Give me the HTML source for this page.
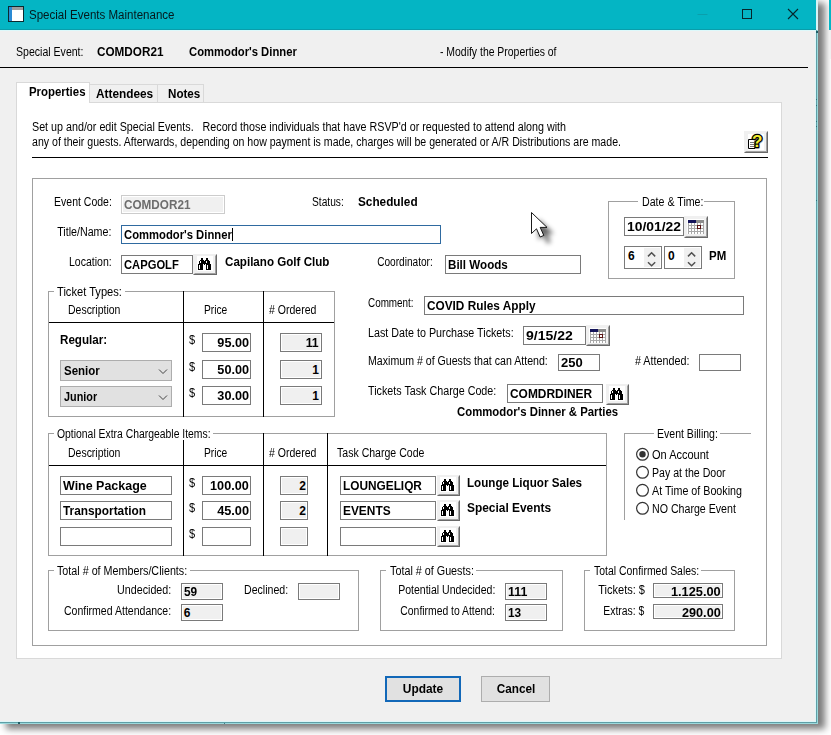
<!DOCTYPE html>
<html><head><meta charset="utf-8"><title>Special Events Maintenance</title>
<style>
html,body{margin:0;padding:0;background:#fff}
body{width:831px;height:735px;position:relative;overflow:hidden;font:12px/14px "Liberation Sans",sans-serif;color:#000}
.a{position:absolute;box-sizing:border-box}
.t{position:absolute;white-space:pre;font:12px/14px "Liberation Sans",sans-serif}
</style></head><body>
<div class="a" style="left:6px;top:3px;width:818.5px;height:725.5px;background:rgba(0,0,0,.52);filter:blur(3.7px)"></div>
<div class="a" style="left:0;top:0;width:818px;height:724px;background:#F0F0F0"></div>
<div class="a" style="left:829px;top:0;width:2px;height:30px;background:#04B5C4"></div>
<div class="a" style="left:829px;top:30px;width:2px;height:29px;background:#F0F0F0"></div>
<div class="a" style="left:815px;top:30px;width:1px;height:692px;background:#DDF6F8"></div>
<div class="a" style="left:816px;top:30px;width:1px;height:694px;background:#5E9FA6"></div>
<div class="a" style="left:817px;top:0;width:1px;height:724px;background:#9ADADD"></div>
<div class="a" style="left:0;top:721px;width:816px;height:1px;background:#DDF6F8"></div>
<div class="a" style="left:0;top:722px;width:817px;height:1px;background:#5E9FA6"></div>
<div class="a" style="left:0;top:723px;width:818px;height:1px;background:#9ADADD"></div>
<div class="a" style="left:18px;top:722px;width:2px;height:2px;background:#1F5F68"></div>
<div class="a" style="left:224px;top:723px;width:1px;height:1px;background:#3F7F88"></div>
<div class="a" style="left:816px;top:99px;width:1px;height:1px;background:#2F6F78"></div>
<div class="a" style="left:816px;top:105px;width:1px;height:1px;background:#2F6F78"></div>
<div class="a" style="left:816px;top:121px;width:1px;height:1px;background:#2F6F78"></div>
<div class="a" style="left:816px;top:126px;width:1px;height:1px;background:#2F6F78"></div>
<div class="a" style="left:816px;top:200px;width:1px;height:1px;background:#2F6F78"></div>
<div class="a" style="left:816px;top:31px;width:2px;height:2px;background:#1F5F68"></div>
<div class="a" style="left:0;top:0;width:817px;height:30px;background:#04B5C4"></div>
<div class="a" style="left:816px;top:0;width:2px;height:30px;background:#D8F4F6"></div>
<div class="a" style="left:0;top:29px;width:816px;height:1px;background:#0A9DAA"></div>
<div class="a" style="left:0;top:30px;width:816px;height:1px;background:#DDF9FB"></div>
<svg class="a" style="left:8px;top:6px" width="16" height="16" viewBox="0 0 16 16"><rect x="0.5" y="0.5" width="15" height="15" fill="#fff" stroke="#0B2A30" stroke-width="1"/><rect x="1" y="1" width="14" height="3" fill="#9C9C9C"/><rect x="1" y="1" width="3" height="14" fill="#2A8AD4"/></svg>
<span class="t " style="top:8px;left:28.8px;transform:scaleX(0.9608);transform-origin:0 0;color:#05181B;">Special Events Maintenance</span>
<svg class="a" style="left:690px;top:0" width="126" height="30" viewBox="0 0 126 30"><path d="M7.5 14.5h10" stroke="#0A9FAC" stroke-width="1"/><rect x="52.5" y="9.5" width="9" height="9" fill="none" stroke="#06262B" stroke-width="1"/><path d="M98 9l10 10M108 9l-10 10" stroke="#06262B" stroke-width="1.1"/></svg>
<span class="t " style="top:45px;left:16.3px;transform:scaleX(0.8446);transform-origin:0 0;font-size:12.5px;">Special Event:</span>
<span class="t " style="top:45px;left:96.5px;transform:scaleX(0.9777);transform-origin:0 0;font-weight:bold;">COMDOR21</span>
<span class="t " style="top:45px;left:189px;transform:scaleX(0.9384);transform-origin:0 0;font-weight:bold;">Commodor's Dinner</span>
<span class="t " style="top:45px;left:440.3px;transform:scaleX(0.8342);transform-origin:0 0;font-size:12.5px;">- Modify the Properties of</span>
<div class="a" style="left:0px;top:67px;width:808px;height:1px;background:#000;"></div>
<div class="a" style="left:16px;top:102px;width:766px;height:557px;background:#fff;border:1px solid #D9D9D9;"></div>
<div class="a" style="left:89px;top:84px;width:69px;height:19px;background:#F0F0F0;border:1px solid #D9D9D9;"></div>
<div class="a" style="left:157px;top:84px;width:47px;height:19px;background:#F0F0F0;border:1px solid #D9D9D9;"></div>
<div class="a" style="left:16px;top:82px;width:74px;height:21px;background:#fff;border:1px solid #D9D9D9;border-bottom:none;"></div>
<span class="t " style="top:85px;left:28.7px;transform:scaleX(0.9518);transform-origin:0 0;font-weight:bold;">Properties</span>
<span class="t " style="top:87px;left:96.2px;transform:scaleX(0.9859);transform-origin:0 0;font-weight:bold;">Attendees</span>
<span class="t " style="top:87px;left:167.5px;transform:scaleX(0.9687);transform-origin:0 0;font-weight:bold;">Notes</span>
<span class="t " style="top:120px;left:31.6px;transform:scaleX(0.8582);transform-origin:0 0;font-size:12.5px;">Set up and/or edit Special Events.   Record those individuals that have RSVP'd or requested to attend along with</span>
<span class="t " style="top:135px;left:31.6px;transform:scaleX(0.8468);transform-origin:0 0;font-size:12.5px;">any of their guests. Afterwards, depending on how payment is made, charges will be generated or A/R Distributions are made.</span>
<div class="a" style="left:32px;top:157px;width:736px;height:1px;background:#000;"></div>
<div class="a" style="left:744px;top:131px;width:24px;height:22px;background:#F0F0F0;box-sizing:border-box;border-top:1px solid #F0F0F0;border-left:1px solid #F0F0F0;border-right:1px solid #696969;border-bottom:1px solid #696969;"><div class="a" style="left:0;top:0;right:0;bottom:0;border-right:1px solid #A0A0A0;border-bottom:1px solid #A0A0A0;border-top:1px solid #F0F0F0;border-left:1px solid #F0F0F0"></div></div>
<div class="a" style="left:748px;top:134px;width:16px;height:16px;background:#fff;"></div>
<svg class="a" style="left:748px;top:133px;overflow:visible" width="16" height="17" viewBox="0 0 16 17"><path d="M0.5 6.5h6.5v9H0.5z" fill="#fff" stroke="#000" stroke-width="1"/><path d="M2 9.5h4M2 11.5h4M2 13.5h4" stroke="#777" stroke-width="1"/><text x="10.3" y="15.2" font-family="Liberation Sans, sans-serif" font-weight="bold" font-size="17" text-anchor="middle" fill="#bbb" stroke="#bbb" stroke-width="1.5" stroke-linejoin="round">?</text><text x="9.3" y="14.2" font-family="Liberation Sans, sans-serif" font-weight="bold" font-size="17" text-anchor="middle" fill="#000" stroke="#000" stroke-width="2.6" stroke-linejoin="round">?</text><text x="9.3" y="14.2" font-family="Liberation Sans, sans-serif" font-weight="bold" font-size="17" text-anchor="middle" fill="#F4EC2E">?</text></svg>
<div class="a" style="left:32px;top:178px;width:735px;height:468px;border:1px solid #A0A0A0;"></div>
<span class="t " style="top:195px;right:719.5px;transform:scaleX(0.8387);transform-origin:100% 0;font-size:12.5px;">Event Code:</span>
<div class="a" style="left:121px;top:195px;width:104px;height:19px;background:#F0F0F0;border:1px solid #CCCCCC;box-shadow:inset 0 0 0 1px #fff;"></div>
<span class="t " style="top:198px;left:124.4px;transform:scaleX(0.9777);transform-origin:0 0;font-weight:bold;color:#6D6D6D;">COMDOR21</span>
<span class="t " style="top:195px;left:311.8px;transform:scaleX(0.8171);transform-origin:0 0;font-size:12.5px;">Status:</span>
<span class="t " style="top:195px;left:357.5px;transform:scaleX(0.9821);transform-origin:0 0;font-weight:bold;">Scheduled</span>
<span class="t " style="top:225px;right:719.5px;transform:scaleX(0.8559);transform-origin:100% 0;font-size:12.5px;">Title/Name:</span>
<div class="a" style="left:121px;top:225px;width:320px;height:19px;background:#fff;border:1px solid #2F6AA0;"></div>
<span class="t " style="top:228px;left:124.4px;transform:scaleX(0.9384);transform-origin:0 0;font-weight:bold;">Commodor's Dinner</span>
<div class="a" style="left:232px;top:228px;width:1px;height:13px;background:#000;"></div>
<span class="t " style="top:255px;right:719.5px;transform:scaleX(0.8436);transform-origin:100% 0;font-size:12.5px;">Location:</span>
<div class="a" style="left:121px;top:255px;width:72px;height:19px;background:#FFFFFF;border:1px solid #7A7A7A;"></div>
<span class="t " style="top:258px;left:123.8px;transform:scaleX(0.934);transform-origin:0 0;font-weight:bold;">CAPGOLF</span>
<div class="a" style="left:193px;top:254px;width:24px;height:21px;background:#F0F0F0;box-sizing:border-box;border-top:1px solid #F0F0F0;border-left:1px solid #F0F0F0;border-right:1px solid #696969;border-bottom:1px solid #696969;"><div class="a" style="left:0;top:0;right:0;bottom:0;border-right:1px solid #A0A0A0;border-bottom:1px solid #A0A0A0;border-top:1px solid #F0F0F0;border-left:1px solid #F0F0F0"></div></div>
<div class="a" style="left:197px;top:256px;width:16px;height:15px;background:#fff;"></div>
<svg class="a" style="left:198px;top:258px" width="13" height="12" viewBox="0 0 13 12" shape-rendering="crispEdges"><rect x="3" y="0" width="2" height="1" fill="#000"/><rect x="8" y="0" width="2" height="1" fill="#000"/><rect x="3" y="1" width="2" height="1" fill="#000"/><rect x="8" y="1" width="2" height="1" fill="#000"/><rect x="2" y="2" width="4" height="1" fill="#000"/><rect x="7" y="2" width="4" height="1" fill="#000"/><rect x="1" y="3" width="1" height="1" fill="#000"/><rect x="2" y="3" width="1" height="1" fill="#fff"/><rect x="3" y="3" width="5" height="1" fill="#000"/><rect x="8" y="3" width="1" height="1" fill="#fff"/><rect x="9" y="3" width="3" height="1" fill="#000"/><rect x="1" y="4" width="1" height="1" fill="#000"/><rect x="2" y="4" width="1" height="1" fill="#fff"/><rect x="3" y="4" width="5" height="1" fill="#000"/><rect x="8" y="4" width="1" height="1" fill="#fff"/><rect x="9" y="4" width="3" height="1" fill="#000"/><rect x="1" y="5" width="11" height="1" fill="#000"/><rect x="0" y="6" width="5" height="1" fill="#000"/><rect x="6" y="6" width="1" height="1" fill="#000"/><rect x="8" y="6" width="5" height="1" fill="#000"/><rect x="0" y="7" width="1" height="1" fill="#000"/><rect x="1" y="7" width="1" height="1" fill="#fff"/><rect x="2" y="7" width="3" height="1" fill="#000"/><rect x="8" y="7" width="1" height="1" fill="#000"/><rect x="9" y="7" width="1" height="1" fill="#fff"/><rect x="10" y="7" width="3" height="1" fill="#000"/><rect x="0" y="8" width="1" height="1" fill="#000"/><rect x="1" y="8" width="1" height="1" fill="#fff"/><rect x="2" y="8" width="3" height="1" fill="#000"/><rect x="8" y="8" width="1" height="1" fill="#000"/><rect x="9" y="8" width="1" height="1" fill="#fff"/><rect x="10" y="8" width="3" height="1" fill="#000"/><rect x="0" y="9" width="1" height="1" fill="#000"/><rect x="1" y="9" width="1" height="1" fill="#fff"/><rect x="2" y="9" width="3" height="1" fill="#000"/><rect x="8" y="9" width="1" height="1" fill="#000"/><rect x="9" y="9" width="1" height="1" fill="#fff"/><rect x="10" y="9" width="3" height="1" fill="#000"/><rect x="0" y="10" width="1" height="1" fill="#000"/><rect x="1" y="10" width="1" height="1" fill="#fff"/><rect x="2" y="10" width="3" height="1" fill="#000"/><rect x="8" y="10" width="1" height="1" fill="#000"/><rect x="9" y="10" width="1" height="1" fill="#fff"/><rect x="10" y="10" width="3" height="1" fill="#000"/><rect x="0" y="11" width="5" height="1" fill="#000"/><rect x="8" y="11" width="5" height="1" fill="#000"/></svg>
<span class="t " style="top:255px;left:224.6px;transform:scaleX(0.9667);transform-origin:0 0;font-weight:bold;">Capilano Golf Club</span>
<span class="t " style="top:255px;right:398.7px;transform:scaleX(0.8082);transform-origin:100% 0;font-size:12.5px;">Coordinator:</span>
<div class="a" style="left:445px;top:255px;width:136px;height:19px;background:#FFFFFF;border:1px solid #7A7A7A;"></div>
<span class="t " style="top:258px;left:447.8px;transform:scaleX(0.9679);transform-origin:0 0;font-weight:bold;">Bill Woods</span>
<div class="a" style="left:608px;top:201px;width:127px;height:78px;border-top:1px solid #A0A0A0;border-left:1px solid #A0A0A0;border-right:1px solid #A0A0A0;border-bottom:1px solid #A0A0A0;"></div>
<div class="a" style="left:638.2px;top:195px;width:66.29999999999995px;height:14px;background:#fff"></div>
<span class="t " style="top:195px;left:641.5px;transform:scaleX(0.8512);transform-origin:0 0;font-size:12.5px;">Date &amp; Time:</span>
<div class="a" style="left:624px;top:217px;width:60px;height:19px;background:#FFFFFF;border:1px solid #7A7A7A;"></div>
<span class="t " style="top:220px;left:626.8px;transform:scaleX(1.1559);transform-origin:0 0;font-weight:bold;">10/01/22</span>
<div class="a" style="left:684px;top:216px;width:24px;height:22px;background:#F0F0F0;box-sizing:border-box;border-top:1px solid #F0F0F0;border-left:1px solid #F0F0F0;border-right:1px solid #696969;border-bottom:1px solid #696969;"><div class="a" style="left:0;top:0;right:0;bottom:0;border-right:1px solid #A0A0A0;border-bottom:1px solid #A0A0A0;border-top:1px solid #F0F0F0;border-left:1px solid #F0F0F0"></div></div>
<div class="a" style="left:687px;top:219px;width:17px;height:15px;background:#fff;"></div>
<svg class="a" style="left:688px;top:220px" width="16" height="14" viewBox="0 0 16 14" shape-rendering="crispEdges"><rect x="0" y="0" width="8" height="1" fill="#14145A"/><rect x="8" y="0" width="8" height="1" fill="#8C8C8C"/><rect x="0" y="1" width="8" height="1" fill="#14145A"/><rect x="8" y="1" width="8" height="1" fill="#8C8C8C"/><rect x="0" y="2" width="8" height="1" fill="#14145A"/><rect x="8" y="2" width="8" height="1" fill="#8C8C8C"/><rect x="0" y="3" width="1" height="1" fill="#A8A8A8"/><rect x="1" y="3" width="2" height="1" fill="#fff"/><rect x="3" y="3" width="1" height="1" fill="#A8A8A8"/><rect x="4" y="3" width="2" height="1" fill="#fff"/><rect x="6" y="3" width="1" height="1" fill="#A8A8A8"/><rect x="7" y="3" width="2" height="1" fill="#fff"/><rect x="9" y="3" width="1" height="1" fill="#A8A8A8"/><rect x="10" y="3" width="2" height="1" fill="#fff"/><rect x="12" y="3" width="1" height="1" fill="#A8A8A8"/><rect x="13" y="3" width="2" height="1" fill="#fff"/><rect x="15" y="3" width="1" height="1" fill="#A8A8A8"/><rect x="0" y="4" width="1" height="1" fill="#A8A8A8"/><rect x="1" y="4" width="2" height="1" fill="#fff"/><rect x="3" y="4" width="1" height="1" fill="#A8A8A8"/><rect x="4" y="4" width="2" height="1" fill="#fff"/><rect x="6" y="4" width="1" height="1" fill="#A8A8A8"/><rect x="7" y="4" width="2" height="1" fill="#fff"/><rect x="9" y="4" width="1" height="1" fill="#A8A8A8"/><rect x="10" y="4" width="2" height="1" fill="#fff"/><rect x="12" y="4" width="1" height="1" fill="#A8A8A8"/><rect x="13" y="4" width="2" height="1" fill="#fff"/><rect x="15" y="4" width="1" height="1" fill="#A8A8A8"/><rect x="0" y="5" width="9" height="1" fill="#A8A8A8"/><rect x="9" y="5" width="4" height="1" fill="#5A1414"/><rect x="13" y="5" width="3" height="1" fill="#A8A8A8"/><rect x="0" y="6" width="1" height="1" fill="#A8A8A8"/><rect x="1" y="6" width="2" height="1" fill="#fff"/><rect x="3" y="6" width="1" height="1" fill="#A8A8A8"/><rect x="4" y="6" width="2" height="1" fill="#fff"/><rect x="6" y="6" width="1" height="1" fill="#A8A8A8"/><rect x="7" y="6" width="2" height="1" fill="#fff"/><rect x="9" y="6" width="1" height="1" fill="#5A1414"/><rect x="10" y="6" width="2" height="1" fill="#fff"/><rect x="12" y="6" width="1" height="1" fill="#5A1414"/><rect x="13" y="6" width="2" height="1" fill="#fff"/><rect x="15" y="6" width="1" height="1" fill="#A8A8A8"/><rect x="0" y="7" width="1" height="1" fill="#A8A8A8"/><rect x="1" y="7" width="2" height="1" fill="#fff"/><rect x="3" y="7" width="1" height="1" fill="#A8A8A8"/><rect x="4" y="7" width="2" height="1" fill="#fff"/><rect x="6" y="7" width="1" height="1" fill="#A8A8A8"/><rect x="7" y="7" width="2" height="1" fill="#fff"/><rect x="9" y="7" width="1" height="1" fill="#5A1414"/><rect x="10" y="7" width="2" height="1" fill="#fff"/><rect x="12" y="7" width="1" height="1" fill="#5A1414"/><rect x="13" y="7" width="2" height="1" fill="#fff"/><rect x="15" y="7" width="1" height="1" fill="#A8A8A8"/><rect x="0" y="8" width="9" height="1" fill="#A8A8A8"/><rect x="9" y="8" width="4" height="1" fill="#5A1414"/><rect x="13" y="8" width="3" height="1" fill="#A8A8A8"/><rect x="0" y="9" width="1" height="1" fill="#A8A8A8"/><rect x="1" y="9" width="2" height="1" fill="#fff"/><rect x="3" y="9" width="1" height="1" fill="#A8A8A8"/><rect x="4" y="9" width="2" height="1" fill="#fff"/><rect x="6" y="9" width="1" height="1" fill="#A8A8A8"/><rect x="7" y="9" width="2" height="1" fill="#fff"/><rect x="9" y="9" width="1" height="1" fill="#A8A8A8"/><rect x="10" y="9" width="2" height="1" fill="#fff"/><rect x="12" y="9" width="1" height="1" fill="#A8A8A8"/><rect x="13" y="9" width="2" height="1" fill="#fff"/><rect x="15" y="9" width="1" height="1" fill="#A8A8A8"/><rect x="0" y="10" width="1" height="1" fill="#A8A8A8"/><rect x="1" y="10" width="2" height="1" fill="#fff"/><rect x="3" y="10" width="1" height="1" fill="#A8A8A8"/><rect x="4" y="10" width="2" height="1" fill="#fff"/><rect x="6" y="10" width="1" height="1" fill="#A8A8A8"/><rect x="7" y="10" width="2" height="1" fill="#fff"/><rect x="9" y="10" width="1" height="1" fill="#A8A8A8"/><rect x="10" y="10" width="2" height="1" fill="#fff"/><rect x="12" y="10" width="1" height="1" fill="#A8A8A8"/><rect x="13" y="10" width="2" height="1" fill="#fff"/><rect x="15" y="10" width="1" height="1" fill="#A8A8A8"/><rect x="0" y="11" width="16" height="1" fill="#A8A8A8"/><rect x="0" y="12" width="1" height="1" fill="#A8A8A8"/><rect x="1" y="12" width="2" height="1" fill="#fff"/><rect x="3" y="12" width="1" height="1" fill="#A8A8A8"/><rect x="4" y="12" width="2" height="1" fill="#fff"/><rect x="6" y="12" width="1" height="1" fill="#A8A8A8"/><rect x="7" y="12" width="2" height="1" fill="#fff"/><rect x="9" y="12" width="1" height="1" fill="#A8A8A8"/><rect x="10" y="12" width="2" height="1" fill="#fff"/><rect x="12" y="12" width="1" height="1" fill="#A8A8A8"/><rect x="13" y="12" width="2" height="1" fill="#fff"/><rect x="15" y="12" width="1" height="1" fill="#A8A8A8"/><rect x="0" y="13" width="1" height="1" fill="#A8A8A8"/><rect x="1" y="13" width="2" height="1" fill="#fff"/><rect x="3" y="13" width="1" height="1" fill="#A8A8A8"/><rect x="4" y="13" width="2" height="1" fill="#fff"/><rect x="6" y="13" width="1" height="1" fill="#A8A8A8"/><rect x="7" y="13" width="2" height="1" fill="#fff"/><rect x="9" y="13" width="1" height="1" fill="#A8A8A8"/><rect x="10" y="13" width="2" height="1" fill="#fff"/><rect x="12" y="13" width="1" height="1" fill="#A8A8A8"/><rect x="13" y="13" width="2" height="1" fill="#fff"/><rect x="15" y="13" width="1" height="1" fill="#A8A8A8"/></svg>
<div class="a" style="left:624px;top:246px;width:38px;height:23px;background:#fff;border:1px solid #7A7A7A;"></div>
<span class="t " style="top:249px;left:628px;transform:scaleX(1.0);transform-origin:0 0;font-weight:bold;">6</span>
<div class="a" style="left:644px;top:248px;width:16px;height:19px;background:#F0F0F0"></div>
<svg class="a" style="left:644px;top:248px" width="16" height="19" viewBox="0 0 16 19"><path d="M4 8.4l3.6-3.6 3.6 3.6M4 14.2l3.6 3.6 3.6-3.6" stroke="#505050" stroke-width="1.5" fill="none"/></svg>
<div class="a" style="left:664px;top:246px;width:38px;height:23px;background:#fff;border:1px solid #7A7A7A;"></div>
<span class="t " style="top:249px;left:668px;transform:scaleX(1.0);transform-origin:0 0;font-weight:bold;">0</span>
<div class="a" style="left:684px;top:248px;width:16px;height:19px;background:#F0F0F0"></div>
<svg class="a" style="left:684px;top:248px" width="16" height="19" viewBox="0 0 16 19"><path d="M4 8.4l3.6-3.6 3.6 3.6M4 14.2l3.6 3.6 3.6-3.6" stroke="#505050" stroke-width="1.5" fill="none"/></svg>
<span class="t " style="top:249px;left:709px;transform:scaleX(0.9556);transform-origin:0 0;font-weight:bold;">PM</span>
<div class="a" style="left:48px;top:291px;width:287px;height:126px;border-top:1px solid #A0A0A0;border-left:1px solid #A0A0A0;border-right:1px solid #A0A0A0;border-bottom:1px solid #A0A0A0;"></div>
<div class="a" style="left:53.8px;top:285px;width:70.9px;height:14px;background:#fff"></div>
<span class="t " style="top:285px;left:57.1px;transform:scaleX(0.8897);transform-origin:0 0;font-size:12.5px;">Ticket Types:</span>
<div class="a" style="left:183px;top:291px;width:1px;height:126px;background:#000;"></div>
<div class="a" style="left:263px;top:291px;width:1px;height:126px;background:#000;"></div>
<div class="a" style="left:49px;top:322px;width:285px;height:1px;background:#000;"></div>
<span class="t " style="top:303px;left:68.2px;transform:scaleX(0.838);transform-origin:0 0;font-size:12.5px;">Description</span>
<span class="t " style="top:303px;left:204.0px;transform:scaleX(0.818);transform-origin:0 0;font-size:12.5px;">Price</span>
<span class="t " style="top:303px;left:269.3px;transform:scaleX(0.8422);transform-origin:0 0;font-size:12.5px;"># Ordered</span>
<span class="t " style="top:333px;left:60.4px;transform:scaleX(0.9694);transform-origin:0 0;font-weight:bold;">Regular:</span>
<div class="a" style="left:60px;top:360px;width:112px;height:21px;background:#E1E1E1;border:1px solid #ADADAD;"></div>
<span class="t " style="top:364px;left:64.4px;transform:scaleX(0.9587);transform-origin:0 0;font-weight:bold;">Senior</span>
<svg class="a" style="left:158px;top:368px" width="10" height="7" viewBox="0 0 10 7"><path d="M1 1.5l4 4 4-4" stroke="#444" stroke-width="1" fill="none"/></svg>
<div class="a" style="left:60px;top:386px;width:112px;height:21px;background:#E1E1E1;border:1px solid #ADADAD;"></div>
<span class="t " style="top:390px;left:64.4px;transform:scaleX(0.9026);transform-origin:0 0;font-weight:bold;">Junior</span>
<svg class="a" style="left:158px;top:394px" width="10" height="7" viewBox="0 0 10 7"><path d="M1 1.5l4 4 4-4" stroke="#444" stroke-width="1" fill="none"/></svg>
<span class="t " style="top:333px;left:188.6px;transform:scaleX(0.885);transform-origin:0 0;font-size:12.5px;">$</span>
<div class="a" style="left:202px;top:333px;width:49px;height:19px;background:#FFFFFF;border:1px solid #7A7A7A;"></div>
<span class="t " style="top:336px;right:582.0px;transform:scaleX(1.0556);transform-origin:100% 0;font-weight:bold;">95.00</span>
<div class="a" style="left:280px;top:333px;width:42px;height:19px;background:#F0F0F0;border:1px solid #7A7A7A;box-shadow:inset 0 0 0 1px #fff;"></div>
<span class="t " style="top:336px;right:512.2px;transform:scaleX(1.0246);transform-origin:100% 0;font-weight:bold;">11</span>
<span class="t " style="top:360px;left:188.6px;transform:scaleX(0.885);transform-origin:0 0;font-size:12.5px;">$</span>
<div class="a" style="left:202px;top:360px;width:49px;height:19px;background:#FFFFFF;border:1px solid #7A7A7A;"></div>
<span class="t " style="top:363px;right:582.0px;transform:scaleX(1.0556);transform-origin:100% 0;font-weight:bold;">50.00</span>
<div class="a" style="left:280px;top:360px;width:42px;height:19px;background:#F0F0F0;border:1px solid #7A7A7A;box-shadow:inset 0 0 0 1px #fff;"></div>
<span class="t " style="top:363px;right:512.2px;transform:scaleX(1.0);transform-origin:100% 0;font-weight:bold;">1</span>
<span class="t " style="top:386px;left:188.6px;transform:scaleX(0.885);transform-origin:0 0;font-size:12.5px;">$</span>
<div class="a" style="left:202px;top:386px;width:49px;height:19px;background:#FFFFFF;border:1px solid #7A7A7A;"></div>
<span class="t " style="top:389px;right:582.0px;transform:scaleX(1.0556);transform-origin:100% 0;font-weight:bold;">30.00</span>
<div class="a" style="left:280px;top:386px;width:42px;height:19px;background:#F0F0F0;border:1px solid #7A7A7A;box-shadow:inset 0 0 0 1px #fff;"></div>
<span class="t " style="top:389px;right:512.2px;transform:scaleX(1.0);transform-origin:100% 0;font-weight:bold;">1</span>
<span class="t " style="top:296px;left:368.0px;transform:scaleX(0.7908);transform-origin:0 0;font-size:12.5px;">Comment:</span>
<div class="a" style="left:424px;top:296px;width:320px;height:19px;background:#FFFFFF;border:1px solid #7A7A7A;"></div>
<span class="t " style="top:299px;left:426.8px;transform:scaleX(0.9841);transform-origin:0 0;font-weight:bold;">COVID Rules Apply</span>
<span class="t " style="top:326px;left:368.0px;transform:scaleX(0.8594);transform-origin:0 0;font-size:12.5px;">Last Date to Purchase Tickets:</span>
<div class="a" style="left:523px;top:326px;width:63px;height:19px;background:#FFFFFF;border:1px solid #7A7A7A;"></div>
<span class="t " style="top:329px;left:525.8px;transform:scaleX(1.1686);transform-origin:0 0;font-weight:bold;">9/15/22</span>
<div class="a" style="left:586px;top:325px;width:24px;height:21px;background:#F0F0F0;box-sizing:border-box;border-top:1px solid #F0F0F0;border-left:1px solid #F0F0F0;border-right:1px solid #696969;border-bottom:1px solid #696969;"><div class="a" style="left:0;top:0;right:0;bottom:0;border-right:1px solid #A0A0A0;border-bottom:1px solid #A0A0A0;border-top:1px solid #F0F0F0;border-left:1px solid #F0F0F0"></div></div>
<div class="a" style="left:589px;top:328px;width:17px;height:14px;background:#fff;"></div>
<svg class="a" style="left:590px;top:329px" width="16" height="14" viewBox="0 0 16 14" shape-rendering="crispEdges"><rect x="0" y="0" width="8" height="1" fill="#14145A"/><rect x="8" y="0" width="8" height="1" fill="#8C8C8C"/><rect x="0" y="1" width="8" height="1" fill="#14145A"/><rect x="8" y="1" width="8" height="1" fill="#8C8C8C"/><rect x="0" y="2" width="8" height="1" fill="#14145A"/><rect x="8" y="2" width="8" height="1" fill="#8C8C8C"/><rect x="0" y="3" width="1" height="1" fill="#A8A8A8"/><rect x="1" y="3" width="2" height="1" fill="#fff"/><rect x="3" y="3" width="1" height="1" fill="#A8A8A8"/><rect x="4" y="3" width="2" height="1" fill="#fff"/><rect x="6" y="3" width="1" height="1" fill="#A8A8A8"/><rect x="7" y="3" width="2" height="1" fill="#fff"/><rect x="9" y="3" width="1" height="1" fill="#A8A8A8"/><rect x="10" y="3" width="2" height="1" fill="#fff"/><rect x="12" y="3" width="1" height="1" fill="#A8A8A8"/><rect x="13" y="3" width="2" height="1" fill="#fff"/><rect x="15" y="3" width="1" height="1" fill="#A8A8A8"/><rect x="0" y="4" width="1" height="1" fill="#A8A8A8"/><rect x="1" y="4" width="2" height="1" fill="#fff"/><rect x="3" y="4" width="1" height="1" fill="#A8A8A8"/><rect x="4" y="4" width="2" height="1" fill="#fff"/><rect x="6" y="4" width="1" height="1" fill="#A8A8A8"/><rect x="7" y="4" width="2" height="1" fill="#fff"/><rect x="9" y="4" width="1" height="1" fill="#A8A8A8"/><rect x="10" y="4" width="2" height="1" fill="#fff"/><rect x="12" y="4" width="1" height="1" fill="#A8A8A8"/><rect x="13" y="4" width="2" height="1" fill="#fff"/><rect x="15" y="4" width="1" height="1" fill="#A8A8A8"/><rect x="0" y="5" width="9" height="1" fill="#A8A8A8"/><rect x="9" y="5" width="4" height="1" fill="#5A1414"/><rect x="13" y="5" width="3" height="1" fill="#A8A8A8"/><rect x="0" y="6" width="1" height="1" fill="#A8A8A8"/><rect x="1" y="6" width="2" height="1" fill="#fff"/><rect x="3" y="6" width="1" height="1" fill="#A8A8A8"/><rect x="4" y="6" width="2" height="1" fill="#fff"/><rect x="6" y="6" width="1" height="1" fill="#A8A8A8"/><rect x="7" y="6" width="2" height="1" fill="#fff"/><rect x="9" y="6" width="1" height="1" fill="#5A1414"/><rect x="10" y="6" width="2" height="1" fill="#fff"/><rect x="12" y="6" width="1" height="1" fill="#5A1414"/><rect x="13" y="6" width="2" height="1" fill="#fff"/><rect x="15" y="6" width="1" height="1" fill="#A8A8A8"/><rect x="0" y="7" width="1" height="1" fill="#A8A8A8"/><rect x="1" y="7" width="2" height="1" fill="#fff"/><rect x="3" y="7" width="1" height="1" fill="#A8A8A8"/><rect x="4" y="7" width="2" height="1" fill="#fff"/><rect x="6" y="7" width="1" height="1" fill="#A8A8A8"/><rect x="7" y="7" width="2" height="1" fill="#fff"/><rect x="9" y="7" width="1" height="1" fill="#5A1414"/><rect x="10" y="7" width="2" height="1" fill="#fff"/><rect x="12" y="7" width="1" height="1" fill="#5A1414"/><rect x="13" y="7" width="2" height="1" fill="#fff"/><rect x="15" y="7" width="1" height="1" fill="#A8A8A8"/><rect x="0" y="8" width="9" height="1" fill="#A8A8A8"/><rect x="9" y="8" width="4" height="1" fill="#5A1414"/><rect x="13" y="8" width="3" height="1" fill="#A8A8A8"/><rect x="0" y="9" width="1" height="1" fill="#A8A8A8"/><rect x="1" y="9" width="2" height="1" fill="#fff"/><rect x="3" y="9" width="1" height="1" fill="#A8A8A8"/><rect x="4" y="9" width="2" height="1" fill="#fff"/><rect x="6" y="9" width="1" height="1" fill="#A8A8A8"/><rect x="7" y="9" width="2" height="1" fill="#fff"/><rect x="9" y="9" width="1" height="1" fill="#A8A8A8"/><rect x="10" y="9" width="2" height="1" fill="#fff"/><rect x="12" y="9" width="1" height="1" fill="#A8A8A8"/><rect x="13" y="9" width="2" height="1" fill="#fff"/><rect x="15" y="9" width="1" height="1" fill="#A8A8A8"/><rect x="0" y="10" width="1" height="1" fill="#A8A8A8"/><rect x="1" y="10" width="2" height="1" fill="#fff"/><rect x="3" y="10" width="1" height="1" fill="#A8A8A8"/><rect x="4" y="10" width="2" height="1" fill="#fff"/><rect x="6" y="10" width="1" height="1" fill="#A8A8A8"/><rect x="7" y="10" width="2" height="1" fill="#fff"/><rect x="9" y="10" width="1" height="1" fill="#A8A8A8"/><rect x="10" y="10" width="2" height="1" fill="#fff"/><rect x="12" y="10" width="1" height="1" fill="#A8A8A8"/><rect x="13" y="10" width="2" height="1" fill="#fff"/><rect x="15" y="10" width="1" height="1" fill="#A8A8A8"/><rect x="0" y="11" width="16" height="1" fill="#A8A8A8"/><rect x="0" y="12" width="1" height="1" fill="#A8A8A8"/><rect x="1" y="12" width="2" height="1" fill="#fff"/><rect x="3" y="12" width="1" height="1" fill="#A8A8A8"/><rect x="4" y="12" width="2" height="1" fill="#fff"/><rect x="6" y="12" width="1" height="1" fill="#A8A8A8"/><rect x="7" y="12" width="2" height="1" fill="#fff"/><rect x="9" y="12" width="1" height="1" fill="#A8A8A8"/><rect x="10" y="12" width="2" height="1" fill="#fff"/><rect x="12" y="12" width="1" height="1" fill="#A8A8A8"/><rect x="13" y="12" width="2" height="1" fill="#fff"/><rect x="15" y="12" width="1" height="1" fill="#A8A8A8"/><rect x="0" y="13" width="1" height="1" fill="#A8A8A8"/><rect x="1" y="13" width="2" height="1" fill="#fff"/><rect x="3" y="13" width="1" height="1" fill="#A8A8A8"/><rect x="4" y="13" width="2" height="1" fill="#fff"/><rect x="6" y="13" width="1" height="1" fill="#A8A8A8"/><rect x="7" y="13" width="2" height="1" fill="#fff"/><rect x="9" y="13" width="1" height="1" fill="#A8A8A8"/><rect x="10" y="13" width="2" height="1" fill="#fff"/><rect x="12" y="13" width="1" height="1" fill="#A8A8A8"/><rect x="13" y="13" width="2" height="1" fill="#fff"/><rect x="15" y="13" width="1" height="1" fill="#A8A8A8"/></svg>
<span class="t " style="top:354px;left:368.0px;transform:scaleX(0.8485);transform-origin:0 0;font-size:12.5px;">Maximum # of Guests that can Attend:</span>
<div class="a" style="left:558px;top:354px;width:42px;height:17px;background:#FFFFFF;border:1px solid #7A7A7A;"></div>
<span class="t " style="top:356px;left:560.8px;transform:scaleX(1.0833);transform-origin:0 0;font-weight:bold;">250</span>
<span class="t " style="top:354px;left:634.6px;transform:scaleX(0.8599);transform-origin:0 0;font-size:12.5px;"># Attended:</span>
<div class="a" style="left:699px;top:354px;width:42px;height:17px;background:#FFFFFF;border:1px solid #7A7A7A;"></div>
<span class="t " style="top:384px;left:368.0px;transform:scaleX(0.8589);transform-origin:0 0;font-size:12.5px;">Tickets Task Charge Code:</span>
<div class="a" style="left:507px;top:384px;width:96px;height:19px;background:#FFFFFF;border:1px solid #7A7A7A;"></div>
<span class="t " style="top:387px;left:509.8px;transform:scaleX(0.9943);transform-origin:0 0;font-weight:bold;">COMDRDINER</span>
<div class="a" style="left:606px;top:384px;width:23px;height:21px;background:#F0F0F0;box-sizing:border-box;border-top:1px solid #F0F0F0;border-left:1px solid #F0F0F0;border-right:1px solid #696969;border-bottom:1px solid #696969;"><div class="a" style="left:0;top:0;right:0;bottom:0;border-right:1px solid #A0A0A0;border-bottom:1px solid #A0A0A0;border-top:1px solid #F0F0F0;border-left:1px solid #F0F0F0"></div></div>
<div class="a" style="left:609px;top:386px;width:16px;height:15px;background:#fff;"></div>
<svg class="a" style="left:610px;top:388px" width="13" height="12" viewBox="0 0 13 12" shape-rendering="crispEdges"><rect x="3" y="0" width="2" height="1" fill="#000"/><rect x="8" y="0" width="2" height="1" fill="#000"/><rect x="3" y="1" width="2" height="1" fill="#000"/><rect x="8" y="1" width="2" height="1" fill="#000"/><rect x="2" y="2" width="4" height="1" fill="#000"/><rect x="7" y="2" width="4" height="1" fill="#000"/><rect x="1" y="3" width="1" height="1" fill="#000"/><rect x="2" y="3" width="1" height="1" fill="#fff"/><rect x="3" y="3" width="5" height="1" fill="#000"/><rect x="8" y="3" width="1" height="1" fill="#fff"/><rect x="9" y="3" width="3" height="1" fill="#000"/><rect x="1" y="4" width="1" height="1" fill="#000"/><rect x="2" y="4" width="1" height="1" fill="#fff"/><rect x="3" y="4" width="5" height="1" fill="#000"/><rect x="8" y="4" width="1" height="1" fill="#fff"/><rect x="9" y="4" width="3" height="1" fill="#000"/><rect x="1" y="5" width="11" height="1" fill="#000"/><rect x="0" y="6" width="5" height="1" fill="#000"/><rect x="6" y="6" width="1" height="1" fill="#000"/><rect x="8" y="6" width="5" height="1" fill="#000"/><rect x="0" y="7" width="1" height="1" fill="#000"/><rect x="1" y="7" width="1" height="1" fill="#fff"/><rect x="2" y="7" width="3" height="1" fill="#000"/><rect x="8" y="7" width="1" height="1" fill="#000"/><rect x="9" y="7" width="1" height="1" fill="#fff"/><rect x="10" y="7" width="3" height="1" fill="#000"/><rect x="0" y="8" width="1" height="1" fill="#000"/><rect x="1" y="8" width="1" height="1" fill="#fff"/><rect x="2" y="8" width="3" height="1" fill="#000"/><rect x="8" y="8" width="1" height="1" fill="#000"/><rect x="9" y="8" width="1" height="1" fill="#fff"/><rect x="10" y="8" width="3" height="1" fill="#000"/><rect x="0" y="9" width="1" height="1" fill="#000"/><rect x="1" y="9" width="1" height="1" fill="#fff"/><rect x="2" y="9" width="3" height="1" fill="#000"/><rect x="8" y="9" width="1" height="1" fill="#000"/><rect x="9" y="9" width="1" height="1" fill="#fff"/><rect x="10" y="9" width="3" height="1" fill="#000"/><rect x="0" y="10" width="1" height="1" fill="#000"/><rect x="1" y="10" width="1" height="1" fill="#fff"/><rect x="2" y="10" width="3" height="1" fill="#000"/><rect x="8" y="10" width="1" height="1" fill="#000"/><rect x="9" y="10" width="1" height="1" fill="#fff"/><rect x="10" y="10" width="3" height="1" fill="#000"/><rect x="0" y="11" width="5" height="1" fill="#000"/><rect x="8" y="11" width="5" height="1" fill="#000"/></svg>
<span class="t " style="top:405px;left:456.6px;transform:scaleX(0.9463);transform-origin:0 0;font-weight:bold;">Commodor's Dinner &amp; Parties</span>
<div class="a" style="left:48px;top:433px;width:559px;height:123px;border-top:1px solid #A0A0A0;border-left:1px solid #A0A0A0;border-right:1px solid #A0A0A0;border-bottom:1px solid #A0A0A0;"></div>
<div class="a" style="left:53.8px;top:427px;width:159.60000000000002px;height:14px;background:#fff"></div>
<span class="t " style="top:427px;left:57.1px;transform:scaleX(0.8311);transform-origin:0 0;font-size:12.5px;">Optional Extra Chargeable Items:</span>
<div class="a" style="left:183px;top:440px;width:1px;height:116px;background:#000;"></div>
<div class="a" style="left:263px;top:433px;width:1px;height:123px;background:#000;"></div>
<div class="a" style="left:327px;top:433px;width:1px;height:123px;background:#000;"></div>
<div class="a" style="left:49px;top:465px;width:557px;height:1px;background:#000;"></div>
<span class="t " style="top:446px;left:68.2px;transform:scaleX(0.838);transform-origin:0 0;font-size:12.5px;">Description</span>
<span class="t " style="top:446px;left:204.0px;transform:scaleX(0.818);transform-origin:0 0;font-size:12.5px;">Price</span>
<span class="t " style="top:446px;left:269.3px;transform:scaleX(0.8422);transform-origin:0 0;font-size:12.5px;"># Ordered</span>
<span class="t " style="top:446px;left:336.7px;transform:scaleX(0.8442);transform-origin:0 0;font-size:12.5px;">Task Charge Code</span>
<div class="a" style="left:60px;top:476px;width:112px;height:19px;background:#FFFFFF;border:1px solid #7A7A7A;"></div>
<span class="t " style="top:479px;left:62.8px;transform:scaleX(1.0383);transform-origin:0 0;font-weight:bold;">Wine Package</span>
<span class="t " style="top:476px;left:188.6px;transform:scaleX(0.885);transform-origin:0 0;font-size:12.5px;">$</span>
<div class="a" style="left:202px;top:476px;width:49px;height:19px;background:#FFFFFF;border:1px solid #7A7A7A;"></div>
<span class="t " style="top:479px;right:582.0px;transform:scaleX(1.0517);transform-origin:100% 0;font-weight:bold;">100.00</span>
<div class="a" style="left:280px;top:476px;width:28px;height:19px;background:#F0F0F0;border:1px solid #7A7A7A;box-shadow:inset 0 0 0 1px #fff;"></div>
<span class="t " style="top:479px;right:525.0px;transform:scaleX(1.0);transform-origin:100% 0;font-weight:bold;">2</span>
<div class="a" style="left:340px;top:476px;width:96px;height:19px;background:#FFFFFF;border:1px solid #7A7A7A;"></div>
<span class="t " style="top:479px;left:342.8px;transform:scaleX(0.9863);transform-origin:0 0;font-weight:bold;">LOUNGELIQR</span>
<div class="a" style="left:437px;top:475px;width:23px;height:21px;background:#F0F0F0;box-sizing:border-box;border-top:1px solid #F0F0F0;border-left:1px solid #F0F0F0;border-right:1px solid #696969;border-bottom:1px solid #696969;"><div class="a" style="left:0;top:0;right:0;bottom:0;border-right:1px solid #A0A0A0;border-bottom:1px solid #A0A0A0;border-top:1px solid #F0F0F0;border-left:1px solid #F0F0F0"></div></div>
<div class="a" style="left:440px;top:477px;width:16px;height:15px;background:#fff;"></div>
<svg class="a" style="left:441px;top:479px" width="13" height="12" viewBox="0 0 13 12" shape-rendering="crispEdges"><rect x="3" y="0" width="2" height="1" fill="#000"/><rect x="8" y="0" width="2" height="1" fill="#000"/><rect x="3" y="1" width="2" height="1" fill="#000"/><rect x="8" y="1" width="2" height="1" fill="#000"/><rect x="2" y="2" width="4" height="1" fill="#000"/><rect x="7" y="2" width="4" height="1" fill="#000"/><rect x="1" y="3" width="1" height="1" fill="#000"/><rect x="2" y="3" width="1" height="1" fill="#fff"/><rect x="3" y="3" width="5" height="1" fill="#000"/><rect x="8" y="3" width="1" height="1" fill="#fff"/><rect x="9" y="3" width="3" height="1" fill="#000"/><rect x="1" y="4" width="1" height="1" fill="#000"/><rect x="2" y="4" width="1" height="1" fill="#fff"/><rect x="3" y="4" width="5" height="1" fill="#000"/><rect x="8" y="4" width="1" height="1" fill="#fff"/><rect x="9" y="4" width="3" height="1" fill="#000"/><rect x="1" y="5" width="11" height="1" fill="#000"/><rect x="0" y="6" width="5" height="1" fill="#000"/><rect x="6" y="6" width="1" height="1" fill="#000"/><rect x="8" y="6" width="5" height="1" fill="#000"/><rect x="0" y="7" width="1" height="1" fill="#000"/><rect x="1" y="7" width="1" height="1" fill="#fff"/><rect x="2" y="7" width="3" height="1" fill="#000"/><rect x="8" y="7" width="1" height="1" fill="#000"/><rect x="9" y="7" width="1" height="1" fill="#fff"/><rect x="10" y="7" width="3" height="1" fill="#000"/><rect x="0" y="8" width="1" height="1" fill="#000"/><rect x="1" y="8" width="1" height="1" fill="#fff"/><rect x="2" y="8" width="3" height="1" fill="#000"/><rect x="8" y="8" width="1" height="1" fill="#000"/><rect x="9" y="8" width="1" height="1" fill="#fff"/><rect x="10" y="8" width="3" height="1" fill="#000"/><rect x="0" y="9" width="1" height="1" fill="#000"/><rect x="1" y="9" width="1" height="1" fill="#fff"/><rect x="2" y="9" width="3" height="1" fill="#000"/><rect x="8" y="9" width="1" height="1" fill="#000"/><rect x="9" y="9" width="1" height="1" fill="#fff"/><rect x="10" y="9" width="3" height="1" fill="#000"/><rect x="0" y="10" width="1" height="1" fill="#000"/><rect x="1" y="10" width="1" height="1" fill="#fff"/><rect x="2" y="10" width="3" height="1" fill="#000"/><rect x="8" y="10" width="1" height="1" fill="#000"/><rect x="9" y="10" width="1" height="1" fill="#fff"/><rect x="10" y="10" width="3" height="1" fill="#000"/><rect x="0" y="11" width="5" height="1" fill="#000"/><rect x="8" y="11" width="5" height="1" fill="#000"/></svg>
<span class="t " style="top:476px;left:466.9px;transform:scaleX(0.9698);transform-origin:0 0;font-weight:bold;">Lounge Liquor Sales</span>
<div class="a" style="left:60px;top:501px;width:112px;height:19px;background:#FFFFFF;border:1px solid #7A7A7A;"></div>
<span class="t " style="top:504px;left:62.8px;transform:scaleX(0.9867);transform-origin:0 0;font-weight:bold;">Transportation</span>
<span class="t " style="top:501px;left:188.6px;transform:scaleX(0.885);transform-origin:0 0;font-size:12.5px;">$</span>
<div class="a" style="left:202px;top:501px;width:49px;height:19px;background:#FFFFFF;border:1px solid #7A7A7A;"></div>
<span class="t " style="top:504px;right:582.0px;transform:scaleX(1.0622);transform-origin:100% 0;font-weight:bold;">45.00</span>
<div class="a" style="left:280px;top:501px;width:28px;height:19px;background:#F0F0F0;border:1px solid #7A7A7A;box-shadow:inset 0 0 0 1px #fff;"></div>
<span class="t " style="top:504px;right:525.0px;transform:scaleX(1.0);transform-origin:100% 0;font-weight:bold;">2</span>
<div class="a" style="left:340px;top:501px;width:96px;height:19px;background:#FFFFFF;border:1px solid #7A7A7A;"></div>
<span class="t " style="top:504px;left:342.8px;transform:scaleX(0.9913);transform-origin:0 0;font-weight:bold;">EVENTS</span>
<div class="a" style="left:437px;top:500px;width:23px;height:21px;background:#F0F0F0;box-sizing:border-box;border-top:1px solid #F0F0F0;border-left:1px solid #F0F0F0;border-right:1px solid #696969;border-bottom:1px solid #696969;"><div class="a" style="left:0;top:0;right:0;bottom:0;border-right:1px solid #A0A0A0;border-bottom:1px solid #A0A0A0;border-top:1px solid #F0F0F0;border-left:1px solid #F0F0F0"></div></div>
<div class="a" style="left:440px;top:502px;width:16px;height:15px;background:#fff;"></div>
<svg class="a" style="left:441px;top:504px" width="13" height="12" viewBox="0 0 13 12" shape-rendering="crispEdges"><rect x="3" y="0" width="2" height="1" fill="#000"/><rect x="8" y="0" width="2" height="1" fill="#000"/><rect x="3" y="1" width="2" height="1" fill="#000"/><rect x="8" y="1" width="2" height="1" fill="#000"/><rect x="2" y="2" width="4" height="1" fill="#000"/><rect x="7" y="2" width="4" height="1" fill="#000"/><rect x="1" y="3" width="1" height="1" fill="#000"/><rect x="2" y="3" width="1" height="1" fill="#fff"/><rect x="3" y="3" width="5" height="1" fill="#000"/><rect x="8" y="3" width="1" height="1" fill="#fff"/><rect x="9" y="3" width="3" height="1" fill="#000"/><rect x="1" y="4" width="1" height="1" fill="#000"/><rect x="2" y="4" width="1" height="1" fill="#fff"/><rect x="3" y="4" width="5" height="1" fill="#000"/><rect x="8" y="4" width="1" height="1" fill="#fff"/><rect x="9" y="4" width="3" height="1" fill="#000"/><rect x="1" y="5" width="11" height="1" fill="#000"/><rect x="0" y="6" width="5" height="1" fill="#000"/><rect x="6" y="6" width="1" height="1" fill="#000"/><rect x="8" y="6" width="5" height="1" fill="#000"/><rect x="0" y="7" width="1" height="1" fill="#000"/><rect x="1" y="7" width="1" height="1" fill="#fff"/><rect x="2" y="7" width="3" height="1" fill="#000"/><rect x="8" y="7" width="1" height="1" fill="#000"/><rect x="9" y="7" width="1" height="1" fill="#fff"/><rect x="10" y="7" width="3" height="1" fill="#000"/><rect x="0" y="8" width="1" height="1" fill="#000"/><rect x="1" y="8" width="1" height="1" fill="#fff"/><rect x="2" y="8" width="3" height="1" fill="#000"/><rect x="8" y="8" width="1" height="1" fill="#000"/><rect x="9" y="8" width="1" height="1" fill="#fff"/><rect x="10" y="8" width="3" height="1" fill="#000"/><rect x="0" y="9" width="1" height="1" fill="#000"/><rect x="1" y="9" width="1" height="1" fill="#fff"/><rect x="2" y="9" width="3" height="1" fill="#000"/><rect x="8" y="9" width="1" height="1" fill="#000"/><rect x="9" y="9" width="1" height="1" fill="#fff"/><rect x="10" y="9" width="3" height="1" fill="#000"/><rect x="0" y="10" width="1" height="1" fill="#000"/><rect x="1" y="10" width="1" height="1" fill="#fff"/><rect x="2" y="10" width="3" height="1" fill="#000"/><rect x="8" y="10" width="1" height="1" fill="#000"/><rect x="9" y="10" width="1" height="1" fill="#fff"/><rect x="10" y="10" width="3" height="1" fill="#000"/><rect x="0" y="11" width="5" height="1" fill="#000"/><rect x="8" y="11" width="5" height="1" fill="#000"/></svg>
<span class="t " style="top:501px;left:466.9px;transform:scaleX(0.9927);transform-origin:0 0;font-weight:bold;">Special Events</span>
<div class="a" style="left:60px;top:527px;width:112px;height:19px;background:#FFFFFF;border:1px solid #7A7A7A;"></div>
<span class="t " style="top:527px;left:188.6px;transform:scaleX(0.885);transform-origin:0 0;font-size:12.5px;">$</span>
<div class="a" style="left:202px;top:527px;width:49px;height:19px;background:#FFFFFF;border:1px solid #7A7A7A;"></div>
<div class="a" style="left:280px;top:527px;width:28px;height:19px;background:#F0F0F0;border:1px solid #7A7A7A;box-shadow:inset 0 0 0 1px #fff;"></div>
<div class="a" style="left:340px;top:527px;width:96px;height:19px;background:#FFFFFF;border:1px solid #7A7A7A;"></div>
<div class="a" style="left:437px;top:526px;width:23px;height:21px;background:#F0F0F0;box-sizing:border-box;border-top:1px solid #F0F0F0;border-left:1px solid #F0F0F0;border-right:1px solid #696969;border-bottom:1px solid #696969;"><div class="a" style="left:0;top:0;right:0;bottom:0;border-right:1px solid #A0A0A0;border-bottom:1px solid #A0A0A0;border-top:1px solid #F0F0F0;border-left:1px solid #F0F0F0"></div></div>
<div class="a" style="left:440px;top:528px;width:16px;height:15px;background:#fff;"></div>
<svg class="a" style="left:441px;top:530px" width="13" height="12" viewBox="0 0 13 12" shape-rendering="crispEdges"><rect x="3" y="0" width="2" height="1" fill="#000"/><rect x="8" y="0" width="2" height="1" fill="#000"/><rect x="3" y="1" width="2" height="1" fill="#000"/><rect x="8" y="1" width="2" height="1" fill="#000"/><rect x="2" y="2" width="4" height="1" fill="#000"/><rect x="7" y="2" width="4" height="1" fill="#000"/><rect x="1" y="3" width="1" height="1" fill="#000"/><rect x="2" y="3" width="1" height="1" fill="#fff"/><rect x="3" y="3" width="5" height="1" fill="#000"/><rect x="8" y="3" width="1" height="1" fill="#fff"/><rect x="9" y="3" width="3" height="1" fill="#000"/><rect x="1" y="4" width="1" height="1" fill="#000"/><rect x="2" y="4" width="1" height="1" fill="#fff"/><rect x="3" y="4" width="5" height="1" fill="#000"/><rect x="8" y="4" width="1" height="1" fill="#fff"/><rect x="9" y="4" width="3" height="1" fill="#000"/><rect x="1" y="5" width="11" height="1" fill="#000"/><rect x="0" y="6" width="5" height="1" fill="#000"/><rect x="6" y="6" width="1" height="1" fill="#000"/><rect x="8" y="6" width="5" height="1" fill="#000"/><rect x="0" y="7" width="1" height="1" fill="#000"/><rect x="1" y="7" width="1" height="1" fill="#fff"/><rect x="2" y="7" width="3" height="1" fill="#000"/><rect x="8" y="7" width="1" height="1" fill="#000"/><rect x="9" y="7" width="1" height="1" fill="#fff"/><rect x="10" y="7" width="3" height="1" fill="#000"/><rect x="0" y="8" width="1" height="1" fill="#000"/><rect x="1" y="8" width="1" height="1" fill="#fff"/><rect x="2" y="8" width="3" height="1" fill="#000"/><rect x="8" y="8" width="1" height="1" fill="#000"/><rect x="9" y="8" width="1" height="1" fill="#fff"/><rect x="10" y="8" width="3" height="1" fill="#000"/><rect x="0" y="9" width="1" height="1" fill="#000"/><rect x="1" y="9" width="1" height="1" fill="#fff"/><rect x="2" y="9" width="3" height="1" fill="#000"/><rect x="8" y="9" width="1" height="1" fill="#000"/><rect x="9" y="9" width="1" height="1" fill="#fff"/><rect x="10" y="9" width="3" height="1" fill="#000"/><rect x="0" y="10" width="1" height="1" fill="#000"/><rect x="1" y="10" width="1" height="1" fill="#fff"/><rect x="2" y="10" width="3" height="1" fill="#000"/><rect x="8" y="10" width="1" height="1" fill="#000"/><rect x="9" y="10" width="1" height="1" fill="#fff"/><rect x="10" y="10" width="3" height="1" fill="#000"/><rect x="0" y="11" width="5" height="1" fill="#000"/><rect x="8" y="11" width="5" height="1" fill="#000"/></svg>
<div class="a" style="left:624px;top:433px;width:127px;height:87px;border-top:1px solid #A0A0A0;border-left:1px solid #A0A0A0;"></div>
<div class="a" style="left:653.5px;top:427px;width:66.5px;height:14px;background:#fff"></div>
<span class="t " style="top:427px;left:656.8px;transform:scaleX(0.8427);transform-origin:0 0;font-size:12.5px;">Event Billing:</span>
<svg class="a" style="left:634px;top:446px" width="16" height="16" viewBox="0 0 16 16"><circle cx="8.5" cy="8.3" r="5.9" fill="#fff" stroke="#333" stroke-width="1.2"/><circle cx="8.5" cy="8.3" r="3.2" fill="#333"/></svg>
<span class="t " style="top:447.8px;left:652.4px;transform:scaleX(0.8804);transform-origin:0 0;font-size:12.5px;">On Account</span>
<svg class="a" style="left:634px;top:464px" width="16" height="16" viewBox="0 0 16 16"><circle cx="8.5" cy="8.3" r="5.9" fill="#fff" stroke="#333" stroke-width="1.2"/></svg>
<span class="t " style="top:465.8px;left:652.4px;transform:scaleX(0.8473);transform-origin:0 0;font-size:12.5px;">Pay at the Door</span>
<svg class="a" style="left:634px;top:482px" width="16" height="16" viewBox="0 0 16 16"><circle cx="8.5" cy="8.3" r="5.9" fill="#fff" stroke="#333" stroke-width="1.2"/></svg>
<span class="t " style="top:483.8px;left:652.4px;transform:scaleX(0.8578);transform-origin:0 0;font-size:12.5px;">At Time of Booking</span>
<svg class="a" style="left:634px;top:500px" width="16" height="16" viewBox="0 0 16 16"><circle cx="8.5" cy="8.3" r="5.9" fill="#fff" stroke="#333" stroke-width="1.2"/></svg>
<span class="t " style="top:501.79999999999995px;left:652.4px;transform:scaleX(0.8503);transform-origin:0 0;font-size:12.5px;">NO Charge Event</span>
<div class="a" style="left:48px;top:570px;width:311px;height:61px;border-top:1px solid #A0A0A0;border-left:1px solid #A0A0A0;border-right:1px solid #A0A0A0;border-bottom:1px solid #A0A0A0;"></div>
<div class="a" style="left:53.8px;top:564px;width:136.2px;height:14px;background:#fff"></div>
<span class="t " style="top:564px;left:57.1px;transform:scaleX(0.8597);transform-origin:0 0;font-size:12.5px;">Total # of Members/Clients:</span>
<span class="t " style="top:583px;right:659.4px;transform:scaleX(0.8569);transform-origin:100% 0;font-size:12.5px;">Undecided:</span>
<div class="a" style="left:181px;top:583px;width:42px;height:17px;background:#F0F0F0;border:1px solid #7A7A7A;box-shadow:inset 0 0 0 1px #fff;"></div>
<span class="t " style="top:585px;left:183.8px;transform:scaleX(0.9881);transform-origin:0 0;font-weight:bold;">59</span>
<span class="t " style="top:583px;left:243.9px;transform:scaleX(0.8481);transform-origin:0 0;font-size:12.5px;">Declined:</span>
<div class="a" style="left:298px;top:583px;width:42px;height:17px;background:#F0F0F0;border:1px solid #7A7A7A;box-shadow:inset 0 0 0 1px #fff;"></div>
<span class="t " style="top:604px;right:659.4px;transform:scaleX(0.843);transform-origin:100% 0;font-size:12.5px;">Confirmed Attendance:</span>
<div class="a" style="left:181px;top:604px;width:42px;height:17px;background:#F0F0F0;border:1px solid #7A7A7A;box-shadow:inset 0 0 0 1px #fff;"></div>
<span class="t " style="top:606px;left:183.8px;transform:scaleX(1.0);transform-origin:0 0;font-weight:bold;">6</span>
<div class="a" style="left:380px;top:570px;width:183px;height:61px;border-top:1px solid #A0A0A0;border-left:1px solid #A0A0A0;border-right:1px solid #A0A0A0;border-bottom:1px solid #A0A0A0;"></div>
<div class="a" style="left:386.3px;top:564px;width:89.5px;height:14px;background:#fff"></div>
<span class="t " style="top:564px;left:389.6px;transform:scaleX(0.8624);transform-origin:0 0;font-size:12.5px;">Total # of Guests:</span>
<span class="t " style="top:583px;right:336px;transform:scaleX(0.8425);transform-origin:100% 0;font-size:12.5px;">Potential Undecided:</span>
<div class="a" style="left:505px;top:583px;width:42px;height:17px;background:#F0F0F0;border:1px solid #7A7A7A;box-shadow:inset 0 0 0 1px #fff;"></div>
<span class="t " style="top:585px;left:507.8px;transform:scaleX(1.0319);transform-origin:0 0;font-weight:bold;">111</span>
<span class="t " style="top:604px;right:336px;transform:scaleX(0.8301);transform-origin:100% 0;font-size:12.5px;">Confirmed to Attend:</span>
<div class="a" style="left:505px;top:604px;width:42px;height:17px;background:#F0F0F0;border:1px solid #7A7A7A;box-shadow:inset 0 0 0 1px #fff;"></div>
<span class="t " style="top:606px;left:507.8px;transform:scaleX(0.9881);transform-origin:0 0;font-weight:bold;">13</span>
<div class="a" style="left:584px;top:570px;width:151px;height:61px;border-top:1px solid #A0A0A0;border-left:1px solid #A0A0A0;border-right:1px solid #A0A0A0;border-bottom:1px solid #A0A0A0;"></div>
<div class="a" style="left:590.2px;top:564px;width:110.79999999999995px;height:14px;background:#fff"></div>
<span class="t " style="top:564px;left:593.5px;transform:scaleX(0.8365);transform-origin:0 0;font-size:12.5px;">Total Confirmed Sales:</span>
<span class="t " style="top:583px;right:186.29999999999995px;transform:scaleX(0.8844);transform-origin:100% 0;font-size:12.5px;">Tickets: $</span>
<div class="a" style="left:653px;top:583px;width:70px;height:15px;background:#F0F0F0;border:1px solid #7A7A7A;box-shadow:inset 0 0 0 1px #fff;"></div>
<span class="t " style="top:585px;right:110.0px;transform:scaleX(1.066);transform-origin:100% 0;font-weight:bold;">1.125.00</span>
<span class="t " style="top:604px;right:186.29999999999995px;transform:scaleX(0.8331);transform-origin:100% 0;font-size:12.5px;">Extras: $</span>
<div class="a" style="left:653px;top:604px;width:70px;height:15px;background:#F0F0F0;border:1px solid #7A7A7A;box-shadow:inset 0 0 0 1px #fff;"></div>
<span class="t " style="top:606px;right:110.0px;transform:scaleX(1.0544);transform-origin:100% 0;font-weight:bold;">290.00</span>
<div class="a" style="left:385px;top:676px;width:76px;height:26px;background:#E1E1E1;border:2px solid #1268B8;"></div>
<span class="t " style="top:682px;left:223px;width:400px;text-align:center;transform:scaleX(0.9933);transform-origin:50% 0;font-weight:bold;">Update</span>
<div class="a" style="left:481px;top:676px;width:69px;height:26px;background:#E1E1E1;border:1px solid #ADADAD;"></div>
<span class="t " style="top:682px;left:315.5px;width:400px;text-align:center;transform:scaleX(0.9782);transform-origin:50% 0;font-weight:bold;">Cancel</span>
<svg class="a" style="left:526px;top:207px;overflow:visible" width="40" height="44" viewBox="0 0 40 44"><defs><filter id="cs" x="-50%" y="-50%" width="250%" height="250%"><feGaussianBlur stdDeviation="2.6"/></filter></defs><path d="M5.5 5.5v21l5-4.7 3.7 8.2 3.6-1.6-3.6-8h6.8z" transform="translate(7,6.5)" fill="#000" opacity=".6" filter="url(#cs)"/><path d="M5.5 5.5v21l5-4.7 3.7 8.2 3.6-1.6-3.6-8h6.8z" fill="#fff" stroke="#000" stroke-width=".9"/></svg>
</body></html>
